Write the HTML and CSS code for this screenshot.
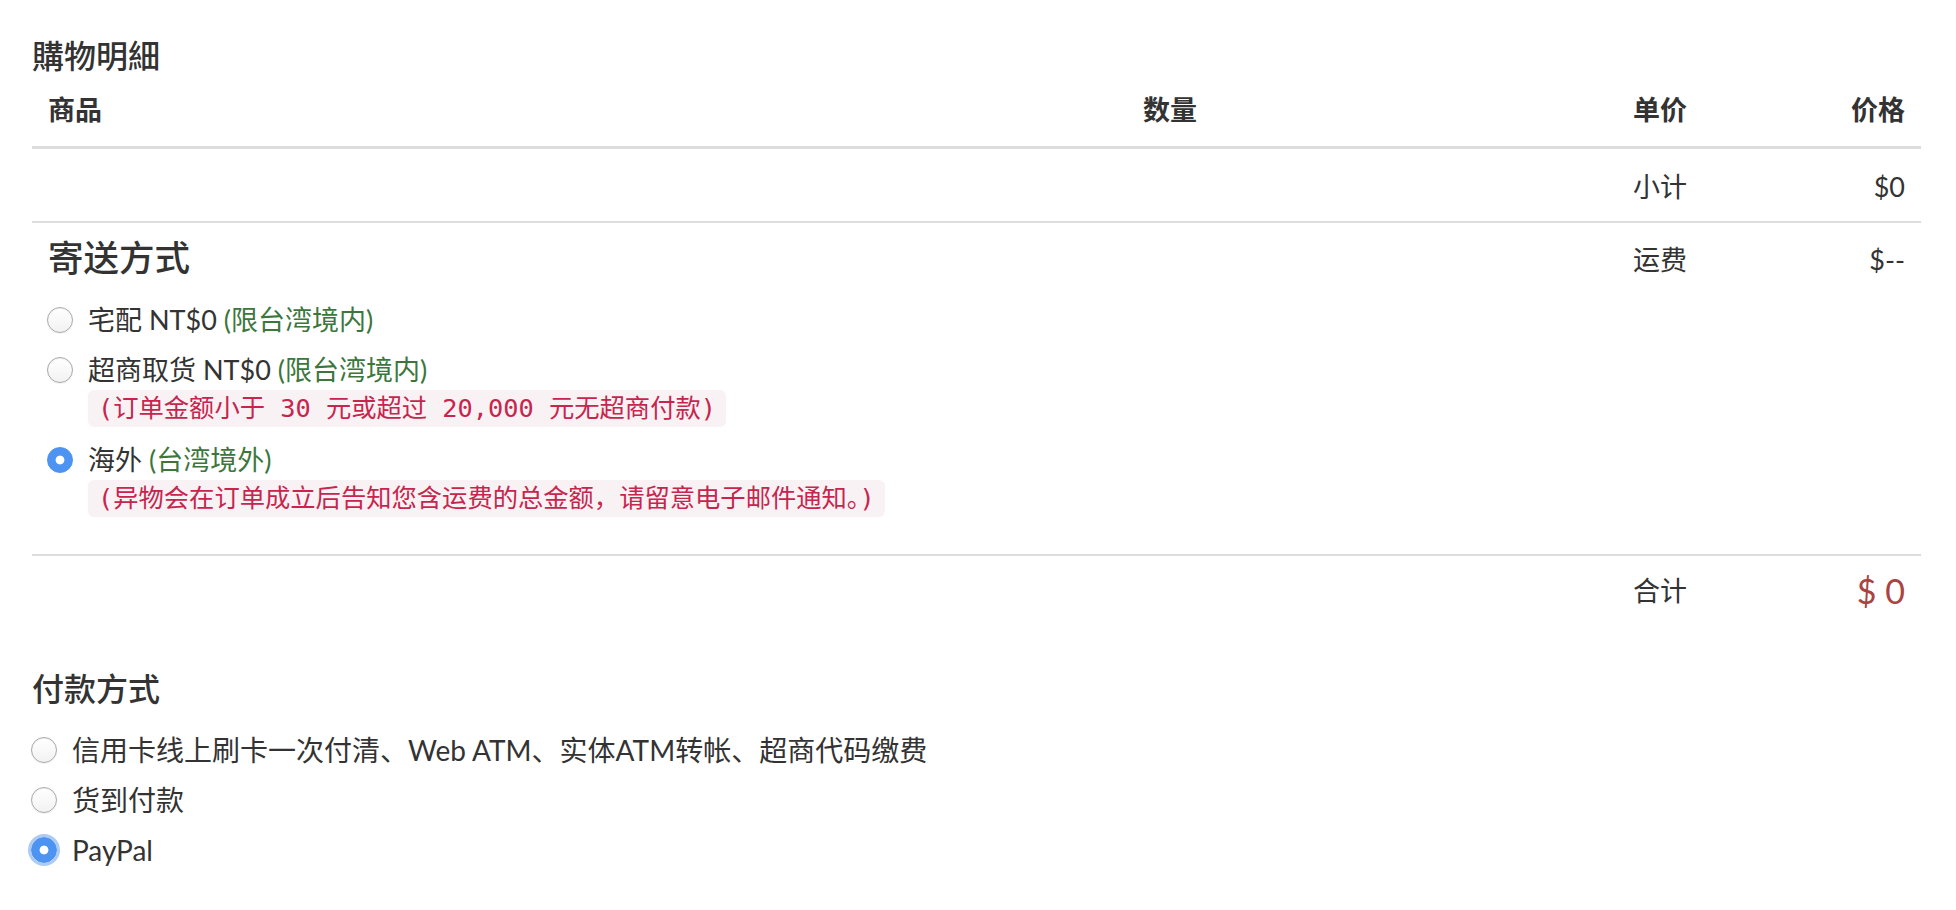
FILE: index.html
```html
<!DOCTYPE html>
<html lang="zh">
<head>
<meta charset="utf-8">
<title>購物明細</title>
<link rel="stylesheet" href="styles.css">
</head>
<body>
<div class="page">
  <h2 class="section-title">購物明細</h2>
  <table class="cart">
    <colgroup>
      <col class="c-item">
      <col class="c-qty">
      <col class="c-unit">
      <col class="c-price">
    </colgroup>
    <thead>
      <tr><th>商品</th><th>数量</th><th>单价</th><th class="num">价格</th></tr>
    </thead>
    <tbody>
      <tr class="subtotal"><td></td><td></td><td>小计</td><td class="num">$0</td></tr>
      <tr class="shipping">
        <td colspan="2" class="ship-cell">
          <h3 class="ship-title">寄送方式</h3>
          <div class="option">
            <label class="opt-row"><input type="radio" name="ship" class="radio"><span>宅配 NT$0 <span class="ok">(限台湾境内)</span></span></label>
          </div>
          <div class="option">
            <label class="opt-row"><input type="radio" name="ship" class="radio"><span>超商取货 NT$0 <span class="ok">(限台湾境内)</span></span></label>
            <code class="note">(订单金额小于 30 元或超过 20,000 元无超商付款)</code>
          </div>
          <div class="option">
            <label class="opt-row"><input type="radio" name="ship" class="radio" checked><span>海外 <span class="ok">(台湾境外)</span></span></label>
            <code class="note">(异物会在订单成立后告知您含运费的总金额，请留意电子邮件通知。)</code>
          </div>
        </td>
        <td class="top">运费</td>
        <td class="num top">$--</td>
      </tr>
      <tr class="total"><td></td><td></td><td>合计</td><td class="num total-amount">$ 0</td></tr>
    </tbody>
  </table>

  <h2 class="section-title pay-title">付款方式</h2>
  <div class="pay-list">
    <label class="opt-row pay-row"><input type="radio" name="pay" class="radio"><span>信用卡线上刷卡一次付清、Web ATM、实体ATM转帐、超商代码缴费</span></label>
    <label class="opt-row pay-row"><input type="radio" name="pay" class="radio"><span>货到付款</span></label>
    <label class="opt-row pay-row"><input type="radio" name="pay" class="radio focus" checked><span>PayPal</span></label>
  </div>
</div>
</body>
</html>
```

FILE: styles.css
```css
html, body {
  margin: 0;
  padding: 0;
  background: #fff;
}

body {
  font-family: Lato, "Noto Sans CJK SC", sans-serif;
  font-size: 27px;
  color: #333;
}

.page {
  padding-left: 32px;
  width: 1889px;
}

.section-title {
  margin: 38px 0 0;
  font-size: 32px;
  line-height: 36px;
  font-weight: 500;
  color: #333;
}

.cart {
  width: 1889px;
  border-collapse: separate;
  border-spacing: 0;
  table-layout: fixed;
}

.c-item { width: 1095px; }
.c-qty { width: 490px; }
.c-unit { width: 144px; }
.c-price { width: 160px; }

.cart th {
  text-align: left;
  font-weight: 700;
  line-height: 28px;
  padding: 22px 16px;
  border-bottom: 3px solid #ddd;
}

.cart td {
  padding: 0 16px;
  line-height: 28px;
  vertical-align: top;
}

.cart .num {
  text-align: right;
}

.subtotal td {
  padding-top: 24px;
  padding-bottom: 20px;
  border-bottom: 2px solid #ddd;
}

.shipping td {
  border-bottom: 2px solid #ddd;
}

.shipping td.top {
  padding-top: 23px;
}

.ship-cell {
  padding: 15px 16px 37px !important;
}

.ship-title {
  margin: 0;
  font-size: 35.5px;
  line-height: 40px;
  font-weight: 500;
}

.option {
  margin-top: 10px;
}

.ship-title + .option {
  margin-top: 22px;
}

.option + .option:last-child {
  margin-top: 13px;
}

.opt-row {
  display: flex;
  align-items: center;
  height: 40px;
  line-height: 40px;
  cursor: pointer;
}

.radio {
  appearance: none;
  -webkit-appearance: none;
  box-sizing: border-box;
  flex: none;
  width: 26px;
  height: 26px;
  margin: 0 15px 0 -1px;
  border-radius: 50%;
  border: 1px solid #a9a9a9;
  background: linear-gradient(#ffffff, #f2f2f2);
  box-shadow: inset 0 1px 1px rgba(0, 0, 0, 0.06), 0 1px 1px rgba(0, 0, 0, 0.06);
}

.radio:checked {
  border-color: #4a8fef;
  background: radial-gradient(circle, #ffffff 0 4px, #4d94f2 4.8px);
  box-shadow: none;
}

.radio.focus {
  box-shadow: 0 0 0 3px #aecbf4;
}

.ok {
  color: #3c763d;
}

.note {
  display: inline-block;
  margin-left: 40px;
  padding: 0 10px;
  height: 37px;
  line-height: 37px;
  font-family: "DejaVu Sans Mono", "Noto Sans CJK SC", monospace;
  font-size: 25.3px;
  color: #c7254e;
  background: #f9f2f4;
  border-radius: 6px;
  white-space: nowrap;
}

.total td {
  padding-top: 15px;
  padding-bottom: 15px;
  line-height: 40px;
}

.total-amount {
  font-size: 34px;
  color: #a94442;
  white-space: pre;
}

.pay-title {
  margin-top: 45px;
}

.pay-list {
  margin-top: 23px;
  display: flex;
  flex-direction: column;
  gap: 10px;
  font-size: 28px;
}
```
